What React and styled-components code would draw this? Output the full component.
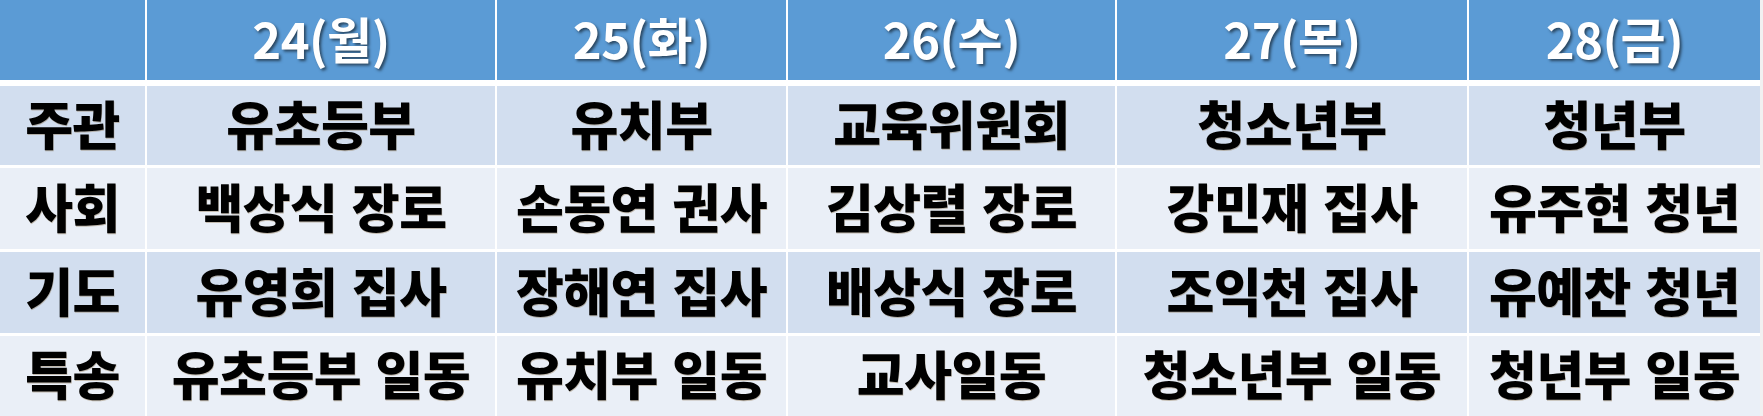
import React from "react"
import styled, { createGlobalStyle } from "styled-components"

const GlobalStyle = createGlobalStyle`
  html, body {
    margin: 0;
    padding: 0;
    background: #ffffff;
  }
  body {
    font-family: "Noto Sans CJK KR", "Noto Sans", sans-serif;
  }
`

const Table = styled.div`
  display: grid;
  grid-template-columns: 145px 348px 289px 327px 350px 291px;
  grid-template-rows: 83px 79px 81px 81px 80px;
  column-gap: 2px;
  row-gap: 3px;
  width: 1760px;
  height: 416px;
  background: #ffffff;
  border-right: 3px solid #f1f1f1;
`

const HeadCell = styled.div`
  height: 80px;
  align-self: start;
  background: #5b9bd5;
  color: #ffffff;
  display: flex;
  align-items: center;
  justify-content: center;
  font-size: 49px;
  font-weight: 700;
  letter-spacing: -0.5px;
  text-shadow: 2px 2px 3px rgba(0, 0, 0, 0.55);
  padding-bottom: 5px;
  box-sizing: border-box;
`

const Cell = styled.div`
  background: ${(p) => (p.$band ? "#d2deef" : "#eaeff7")};
  color: #000000;
  display: flex;
  align-items: center;
  justify-content: center;
  font-size: 52px;
  font-weight: 900;
  word-spacing: 3px;
  letter-spacing: -0.5px;
  white-space: nowrap;
  padding-bottom: 7px;
  box-sizing: border-box;
  text-shadow: 0.5px 0.5px 0 rgba(120, 90, 40, 0.35);
`

const days = ["24(월)", "25(화)", "26(수)", "27(목)", "28(금)"]

const rows = [
  ["주관", "유초등부", "유치부", "교육위원회", "청소년부", "청년부"],
  ["사회", "백상식 장로", "손동연 권사", "김상렬 장로", "강민재 집사", "유주현 청년"],
  ["기도", "유영희 집사", "장해연 집사", "배상식 장로", "조익천 집사", "유예찬 청년"],
  ["특송", "유초등부 일동", "유치부 일동", "교사일동", "청소년부 일동", "청년부 일동"],
]

const App = () => {
  return (
    <>
      <GlobalStyle />
      <Table>
        <HeadCell />
        {days.map((d) => (
          <HeadCell key={d}>{d}</HeadCell>
        ))}
        {rows.map((r, i) =>
          r.map((c, j) => (
            <Cell key={i + "-" + j} $band={i % 2 === 0}>
              {c}
            </Cell>
          ))
        )}
      </Table>
    </>
  )
}

export default App
